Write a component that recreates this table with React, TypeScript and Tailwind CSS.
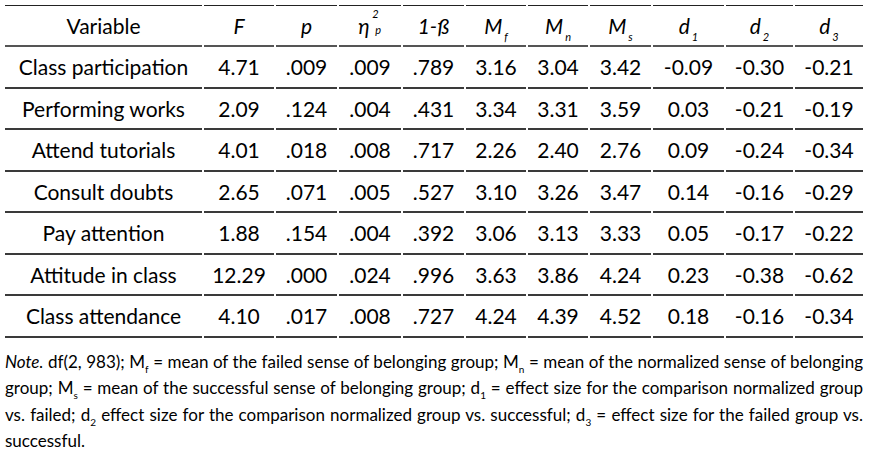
const rows = [
  ["Class participation", "4.71", ".009", ".009", ".789", "3.16", "3.04", "3.42", "-0.09", "-0.30", "-0.21"],
  ["Performing works", "2.09", ".124", ".004", ".431", "3.34", "3.31", "3.59", "0.03", "-0.21", "-0.19"],
  ["Attend tutorials", "4.01", ".018", ".008", ".717", "2.26", "2.40", "2.76", "0.09", "-0.24", "-0.34"],
  ["Consult doubts", "2.65", ".071", ".005", ".527", "3.10", "3.26", "3.47", "0.14", "-0.16", "-0.29"],
  ["Pay attention", "1.88", ".154", ".004", ".392", "3.06", "3.13", "3.33", "0.05", "-0.17", "-0.22"],
  ["Attitude in class", "12.29", ".000", ".024", ".996", "3.63", "3.86", "4.24", "0.23", "-0.38", "-0.62"],
  ["Class attendance", "4.10", ".017", ".008", ".727", "4.24", "4.39", "4.52", "0.18", "-0.16", "-0.34"],
];

function Sub({ base, sub }: { base: string; sub: string }) {
  return (
    <span className="italic">
      {base}
      <span className="relative top-[7px] ml-[2px] text-[11px]">{sub}</span>
    </span>
  );
}

function Eta() {
  return (
    <span className="relative pr-[12px] italic">
      η
      <span className="absolute left-[14px] -top-[4px] text-[11px]">2</span>
      <span className="absolute left-[17px] top-[12px] text-[11px]">p</span>
    </span>
  );
}

const header = [
  <span>Variable</span>,
  <span className="italic">F</span>,
  <span className="italic">p</span>,
  <Eta />,
  <span className="italic">1-ß</span>,
  <Sub base="M" sub="f" />,
  <Sub base="M" sub="n" />,
  <Sub base="M" sub="s" />,
  <Sub base="d" sub="1" />,
  <Sub base="d" sub="2" />,
  <Sub base="d" sub="3" />,
];

function S({ children }: { children: string }) {
  return <span className="relative top-[5px] text-[10px]">{children}</span>;
}

export default function App() {
  return (
    <div className="w-[876px] h-[456px] bg-white text-black font-['Lato',sans-serif]">
      <div className="pl-[5px] pt-[5px]">
        <div className="grid grid-cols-[197px_70px_61px_62px_61px_60px_60px_61px_71px_67px_68px] gap-x-[2px] text-[21px]">
          {header.map((h, i) => (
            <div
              key={i}
              className="flex h-[42px] items-center justify-center border-t border-b-2 border-t-[#222] border-b-[#555]"
            >
              {h}
            </div>
          ))}
          {rows.map((r, ri) =>
            r.map((c, ci) => (
              <div
                key={ri + "-" + ci}
                className="flex h-[41.5px] items-center justify-center border-b-2 border-[#3a3a3a]"
              >
                {c}
              </div>
            ))
          )}
        </div>
        <p className="mt-[12px] w-[858px] text-justify text-[17px] leading-[23.5px]">
          <span className="italic">Note.</span> df(2, 983); M<S>f</S> = mean of the failed sense of belonging group; M
          <S>n</S> = mean of the normalized sense of belonging group; M<S>s</S> = mean of the successful sense of
          belonging group; d<S>1</S> = effect size for the comparison normalized group vs. failed; d<S>2</S> effect
          size for the comparison normalized group vs. successful; d<S>3</S> = effect size for the failed group vs.
          successful.
        </p>
      </div>
    </div>
  );
}
